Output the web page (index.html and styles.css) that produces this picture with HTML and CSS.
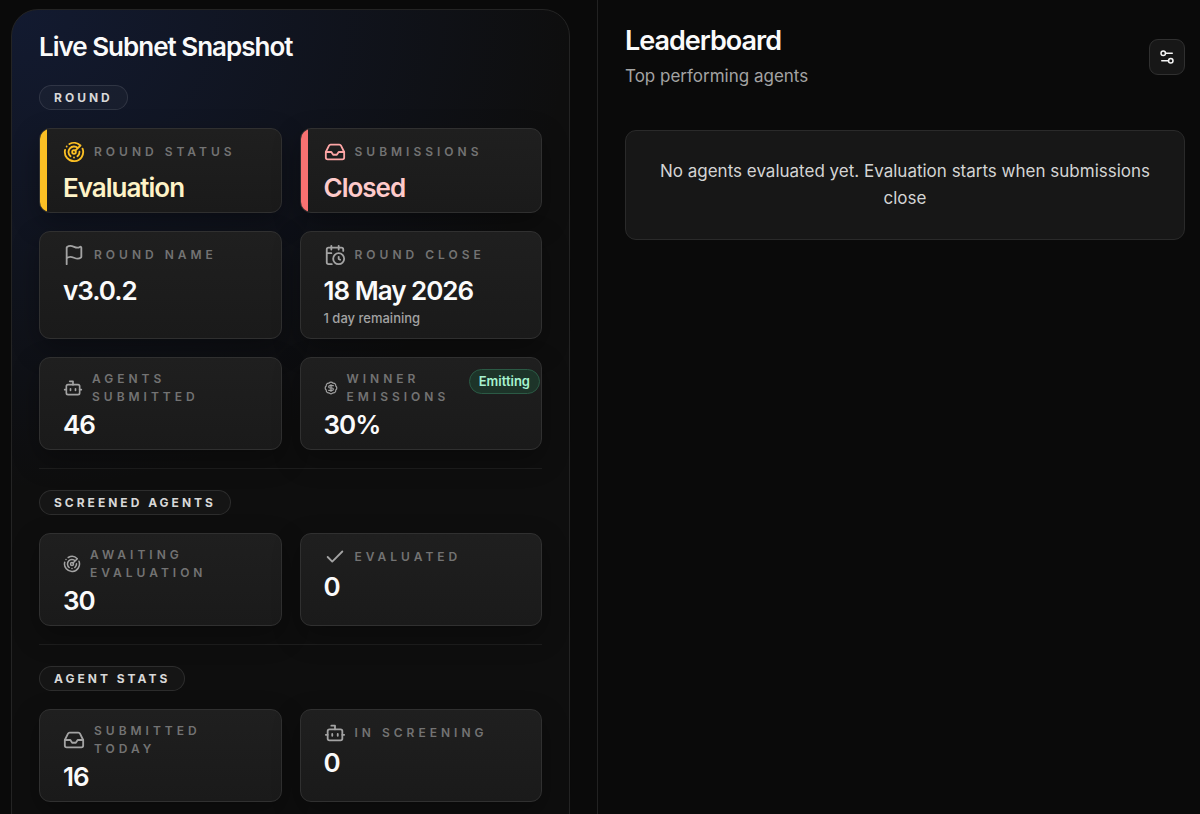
FILE: index.html
```html
<!DOCTYPE html>
<html lang="en">
<head>
  <meta charset="UTF-8">
  <meta name="viewport" content="width=device-width, initial-scale=1.0">
  <title>Live Subnet Snapshot</title>
  <link rel="stylesheet" href="styles.css">
</head>
<body>
  <!-- Shared icons -->
  <svg class="sprite" aria-hidden="true">
    <symbol id="radar" viewBox="0 0 24 24">
      <path d="M19.07 4.93A10 10 0 0 0 6.99 3.34M4 6h.01M2.29 9.62A10 10 0 1 0 21.31 8.35M16.24 7.76A6 6 0 1 0 8.23 16.67M12 18h.01M17.99 11.66A6 6 0 0 1 15.77 16.67M13.41 10.59l5.66-5.66"/>
      <circle cx="12" cy="12" r="2"/>
    </symbol>
    <symbol id="inbox" viewBox="0 0 24 24">
      <path d="M22 12h-6l-2 3h-4l-2-3H2"/>
      <path d="M5.45 5.11 2 12v6a2 2 0 0 0 2 2h16a2 2 0 0 0 2-2v-6l-3.45-6.89A2 2 0 0 0 16.76 4H7.24a2 2 0 0 0-1.79 1.11z"/>
    </symbol>
    <symbol id="flag" viewBox="0 0 24 24">
      <path d="M4 22V4a1 1 0 0 1 .4-.8A6 6 0 0 1 8 2c3 0 5 2 7.333 2q2 0 3.067-.8A1 1 0 0 1 20 4v10a1 1 0 0 1-.4.8A6 6 0 0 1 16 16c-3 0-5-2-8-2a6 6 0 0 0-4 1.528"/>
    </symbol>
    <symbol id="calendar" viewBox="0 0 24 24">
      <path d="M16 14v2.2l1.6 1M16 2v4M21 7.5V6a2 2 0 0 0-2-2H5a2 2 0 0 0-2 2v14a2 2 0 0 0 2 2h3.5M3 10h5M8 2v4"/>
      <circle cx="16" cy="16" r="6"/>
    </symbol>
    <symbol id="bot" viewBox="0 0 24 24">
      <path d="M12 8V4H8M2 14h2M20 14h2M15 13v2M9 13v2"/>
      <rect x="4" y="8" width="16" height="12" rx="2"/>
    </symbol>
    <symbol id="dollar" viewBox="0 0 24 24">
      <path d="M3.85 8.62a4 4 0 0 1 4.78-4.77 4 4 0 0 1 6.74 0 4 4 0 0 1 4.78 4.78 4 4 0 0 1 0 6.74 4 4 0 0 1-4.77 4.78 4 4 0 0 1-6.75 0 4 4 0 0 1-4.78-4.77 4 4 0 0 1 0-6.76Z"/>
      <path d="M16 8h-6a2 2 0 1 0 0 4h4a2 2 0 1 1 0 4H8M12 18V6"/>
    </symbol>
    <symbol id="check" viewBox="0 0 24 24">
      <path d="M20 6 9 17l-5-5"/>
    </symbol>
    <symbol id="settings" viewBox="0 0 24 24">
      <path d="M14 17H5M19 7h-9"/>
      <circle cx="17" cy="17" r="3"/>
      <circle cx="7" cy="7" r="3"/>
    </symbol>
  </svg>

  <main class="layout">
    <section class="snapshot">
      <div class="panel">
        <h1 class="title">Live Subnet Snapshot</h1>

        <section class="group">
          <h2 class="pill">Round</h2>
          <div class="cards">
            <article class="card roomy yellow">
              <h3 class="label"><svg class="icon"><use href="#radar"/></svg>Round Status</h3>
              <p class="value">Evaluation</p>
            </article>
            <article class="card roomy red">
              <h3 class="label"><svg class="icon"><use href="#inbox"/></svg>Submissions</h3>
              <p class="value">Closed</p>
            </article>
            <article class="card roomy">
              <h3 class="label"><svg class="icon"><use href="#flag"/></svg>Round Name</h3>
              <p class="value">v3.0.2</p>
            </article>
            <article class="card roomy">
              <h3 class="label"><svg class="icon"><use href="#calendar"/></svg>Round Close</h3>
              <p class="value">18 May 2026</p>
              <p class="note">1 day remaining</p>
            </article>
            <article class="card">
              <h3 class="label"><svg class="icon large"><use href="#bot"/></svg><span>Agents<br>Submitted</span></h3>
              <p class="value">46</p>
            </article>
            <article class="card">
              <h3 class="label"><svg class="icon small"><use href="#dollar"/></svg><span>Winner<br>Emissions</span></h3>
              <p class="value">30%</p>
              <span class="badge">Emitting</span>
            </article>
          </div>
        </section>

        <section class="group">
          <h2 class="pill">Screened Agents</h2>
          <div class="cards">
            <article class="card">
              <h3 class="label"><svg class="icon medium"><use href="#radar"/></svg><span>Awaiting<br>Evaluation</span></h3>
              <p class="value">30</p>
            </article>
            <article class="card">
              <h3 class="label"><svg class="icon"><use href="#check"/></svg>Evaluated</h3>
              <p class="value">0</p>
            </article>
          </div>
        </section>

        <section class="group">
          <h2 class="pill">Agent Stats</h2>
          <div class="cards">
            <article class="card">
              <h3 class="label"><svg class="icon"><use href="#inbox"/></svg><span>Submitted<br>Today</span></h3>
              <p class="value">16</p>
            </article>
            <article class="card">
              <h3 class="label"><svg class="icon"><use href="#bot"/></svg>In Screening</h3>
              <p class="value">0</p>
            </article>
          </div>
        </section>
      </div>
    </section>

    <section class="leaderboard">
      <header class="leaderboard-header">
        <div>
          <h2 class="title large">Leaderboard</h2>
          <p class="subtitle">Top performing agents</p>
        </div>
        <button class="settings-button" type="button" aria-label="Leaderboard settings">
          <svg class="icon"><use href="#settings"/></svg>
        </button>
      </header>
      <p class="empty">No agents evaluated yet. Evaluation starts when submissions close</p>
    </section>
  </main>
</body>
</html>
```

FILE: styles.css
```css
* {
  box-sizing: border-box;
}

body {
  margin: 0;
  font-family: Inter, "Liberation Sans", sans-serif;
  color: #fafafa;
  background-color: #0a0a0a;
}

h1, h2, h3, p {
  margin: 0;
}

.sprite {
  display: none;
}

.layout {
  display: grid;
  grid-template-columns: calc(50% - 2px) minmax(0, 1fr);
  height: 100vh;
}

.snapshot {
  padding: 9px 27px 27px 11px;
  border-right: 1px solid #222222;
  overflow-y: auto;
  scrollbar-width: none;
}

.panel {
  padding: 20px 27px 54px;
  border: 1px solid #242424;
  border-radius: 27px;
  background:
    radial-gradient(560px 480px at top left, rgba(30, 58, 138, 0.28), transparent),
    #0e0e0e;
}

.title {
  font-size: 26px;
  font-weight: 600;
  line-height: 33px;
  letter-spacing: -1px;
}

.title.large {
  font-size: 27px;
}

.group {
  padding-top: 22px;
}

.group + .group {
  margin-top: 18px;
  padding-top: 21px;
  border-top: 1px solid #1e1e1e;
}

.pill {
  width: fit-content;
  margin-bottom: 18px;
  padding: 0 14px;
  border: 1px solid rgba(255, 255, 255, 0.1);
  border-radius: 13px;
  background-color: rgba(255, 255, 255, 0.03);
  color: #d8d8d8;
  font-size: 12px;
  font-weight: 700;
  line-height: 23px;
  letter-spacing: 3px;
  text-transform: uppercase;
}

.cards {
  display: grid;
  grid-template-columns: 1fr 1fr;
  gap: 18px;
}

.card {
  position: relative;
  padding: 12px 23px 9px;
  border: 1px solid #303030;
  border-radius: 11px;
  background: linear-gradient(#1f1f1f, #1a1a1a);
  box-shadow: 0 10px 28px rgba(0, 0, 0, 0.3);
  overflow: hidden;
}

.label {
  display: flex;
  align-items: center;
  gap: 9px;
  min-height: 22px;
  margin-bottom: 4px;
  color: #737373;
  font-size: 12px;
  font-weight: 600;
  line-height: 18px;
  letter-spacing: 4px;
  text-transform: uppercase;
}

.roomy .label {
  margin-bottom: 10px;
}

.icon {
  flex: none;
  width: 22px;
  height: 22px;
  fill: none;
  stroke: #a3a3a3;
  stroke-width: 2;
  stroke-linecap: round;
  stroke-linejoin: round;
}

.icon.large {
  width: 20px;
  height: 20px;
}

.icon.medium {
  width: 18px;
  height: 18px;
}

.icon.small {
  width: 14px;
  height: 14px;
}

.value {
  font-size: 26px;
  font-weight: 600;
  line-height: 30px;
  letter-spacing: -1px;
}

.note {
  margin-top: 2px;
  color: #a3a3a3;
  font-size: 13px;
  font-weight: 500;
  line-height: 21px;
}

/* Coloured status bar on the left edge */
.yellow::before,
.red::before {
  content: "";
  position: absolute;
  top: 0;
  bottom: 0;
  left: 0;
  width: 7px;
}

.yellow::before { background-color: #fbbf24; }
.yellow .icon { stroke: #fbbf24; }
.yellow .value { color: #fef3c7; }

.red::before { background-color: #f87171; }
.red .icon { stroke: #fca5a5; }
.red .value { color: #fecaca; }

.badge {
  position: absolute;
  top: 11px;
  right: 1px;
  padding: 0 9px;
  border: 1px solid #2b5a45;
  border-radius: 13px;
  background-color: #1d3429;
  color: #a7f3d0;
  font-size: 13px;
  font-weight: 600;
  line-height: 23px;
}

.leaderboard {
  padding: 24px 15px 27px 27px;
}

.leaderboard-header {
  display: flex;
  align-items: center;
  justify-content: space-between;
  margin-bottom: 40px;
}

.subtitle {
  margin-top: 6px;
  color: #a3a3a3;
  font-size: 17px;
  line-height: 27px;
}

.settings-button {
  display: flex;
  align-items: center;
  justify-content: center;
  width: 36px;
  height: 36px;
  padding: 0;
  border: 1px solid #303030;
  border-radius: 9px;
  background-color: #171717;
  cursor: pointer;
}

.settings-button .icon {
  width: 18px;
  height: 18px;
  stroke: #f5f5f5;
  stroke-width: 2;
}

.empty {
  padding: 27px;
  border: 1px solid #2a2a2a;
  border-radius: 11px;
  background-color: #171717;
  color: #d4d4d4;
  font-size: 17px;
  line-height: 27px;
  text-align: center;
}
```
